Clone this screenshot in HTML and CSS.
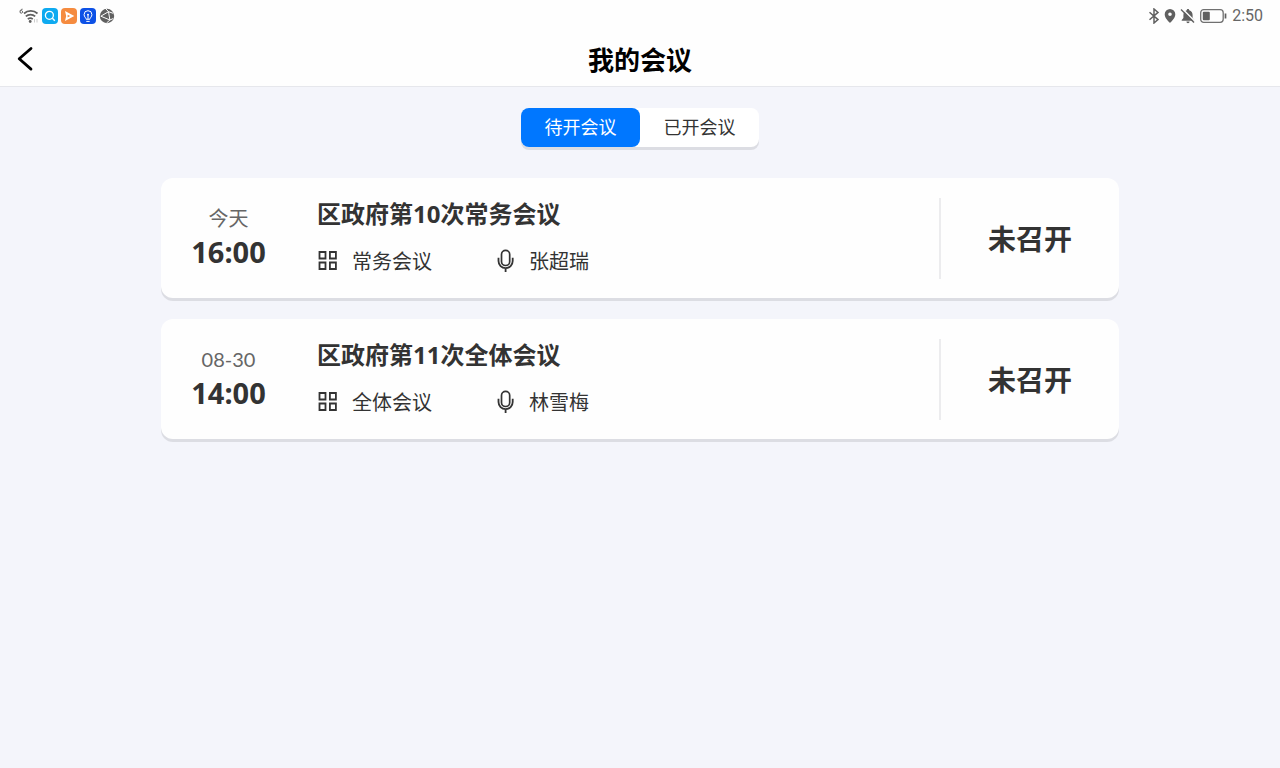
FILE: index.html
```html
<!DOCTYPE html>
<html lang="zh-CN">
<head>
<meta charset="utf-8">
<meta name="viewport" content="width=device-width, initial-scale=1">
<title>我的会议</title>
<link rel="stylesheet" href="styles.css">
</head>
<body>
<svg class="defs" aria-hidden="true">
  <symbol id="grid" viewBox="0 0 21 21">
    <path d="M2.500 2h6v6.500h-6zM12.900 2h6v6.500h-6zM2.500 12.500h6V19h-6zM12.900 12.500h6V19h-6z" fill="none" stroke="currentColor" stroke-width="1.800"/>
  </symbol>
  <symbol id="mic" viewBox="0 0 18 24">
    <rect x="4.500" y="1.300" width="8.200" height="15.200" rx="4.100" fill="none" stroke="currentColor" stroke-width="1.700"/>
    <path d="M1.500 8.800v3.200a7.100 7.100 0 0 0 14.200 0V8.800M8.600 19.100v4" fill="none" stroke="currentColor" stroke-width="1.800"/>
  </symbol>
</svg>
<header class="header">
  <div class="status">
    <div class="status-left">
      <svg width="20" height="16" viewBox="0 0 20 16" fill="none" stroke="#606060">
        <path d="M3.600 1.200C2 1.200 1 2.300 1 3.900a1.300 1.300 0 1 0 .4-1" stroke-width="1"/>
        <path d="M5 5.500a10 10 0 0 1 13.500 0M6.800 8.400a7 7 0 0 1 9.400 0M8.800 11.200a4 4 0 0 1 5 0" stroke-width="1.700"/>
        <circle cx="11.200" cy="13.500" r="1.400" fill="#606060" stroke="none"/>
        <path d="M15.500 14.500v-3.500M18 11v3.500" stroke="#ccc" stroke-width="1"/>
      </svg>
      <svg width="16" height="16" viewBox="0 0 16 16"><rect width="16" height="16" rx="4" fill="#0eaaf0"/><circle cx="7.400" cy="7.300" r="4" fill="none" stroke="#fff" stroke-width="1.300"/><path d="M10.400 10.300l2.400 2.400" stroke="#fff" stroke-width="1.400"/></svg>
      <svg width="16" height="16" viewBox="0 0 16 16"><rect width="16" height="16" rx="4" fill="#f58b3f"/><path d="M4 3l9.300 5L4 13l1.200-5z" fill="#fff"/><path d="M6.600 6.700l2.600 1.400-2.600 1.400z" fill="#f58b3f"/></svg>
      <svg width="16" height="16" viewBox="0 0 16 16"><rect width="16" height="16" rx="4" fill="#0d51e6"/><path d="M6.200 11.300C6.100 9.700 4.100 9 4.100 6.600a3.900 3.900 0 0 1 7.800 0c0 2.400-2 3.100-2.100 4.700zM6.300 13.400h3.400M8 11V7.500" fill="none" stroke="#fff" stroke-width="1"/><circle cx="8" cy="6.800" r="1" fill="#fff"/></svg>
      <svg width="16" height="16" viewBox="0 0 16 16"><circle cx="8" cy="8" r="7.200" fill="#606060"/><path d="M1.800 8.200L9.500 3.700 7 1M9.500 3.700l1.400 8.300 3.400-1.500M1.800 8.200l9.100 3.800-3.400 3M9.500 3.700l4.700 1.600" fill="none" stroke="#fff" stroke-width="1"/></svg>
    </div>
    <div class="status-right">
      <svg width="12" height="16" viewBox="0 0 12 16"><path d="M1.500 4.300l8.500 7.300L6 15V1l4 3.400-8.500 7.300" fill="none" stroke="#606060" stroke-width="1.500"/></svg>
      <svg width="12" height="16" viewBox="0 0 12 16"><path d="M6 1a5.300 5.300 0 0 0-5.300 5.300C.7 9.600 3.700 12.900 6 14.900c2.300-2 5.300-5.300 5.300-8.600A5.300 5.300 0 0 0 6 1zm0 3.500a1.800 1.800 0 1 1 0 3.600 1.800 1.800 0 0 1 0-3.600z" fill="#606060" fill-rule="evenodd"/></svg>
      <svg width="16" height="16" viewBox="0 0 16 16"><path d="M8 1c-.8 0-1.200.5-1.200 1.200C4.500 2.800 3.400 4.700 3.400 7v3L1.700 12v.8h12.600V12l-1.700-2V7c0-2.300-1.100-4.200-3.400-4.800C9.200 1.500 8.800 1 8 1zM6.400 13.600h3.200a1.600 1.600 0 0 1-3.200 0z" fill="#606060"/><path d="M2.300.8l13 13" stroke="#fff" stroke-width="1.600"/><path d="M1 1.500l13 13" stroke="#606060" stroke-width="1.400"/></svg>
      <svg width="28" height="16" viewBox="0 0 28 16"><rect x=".7" y="1.700" width="22.500" height="12.600" rx="3" fill="none" stroke="#707070" stroke-width="1.300"/><rect x="2.800" y="3.800" width="7" height="8.400" rx="1" fill="#606060"/><path d="M25.500 5.500v5" stroke="#606060" stroke-width="1.700"/></svg>
      <time class="clock">2:50</time>
    </div>
  </div>
  <div class="nav">
    <button class="back" type="button" aria-label="返回">
      <svg width="18" height="26" viewBox="0 0 18 26"><path d="M15 2.500L3.200 12.800 15 23.100" fill="none" stroke="#000" stroke-width="2.800" stroke-linecap="round" stroke-linejoin="round"/></svg>
    </button>
    <h1 class="title">我的会议</h1>
  </div>
</header>
<main class="main">
  <div class="tabs" role="tablist">
    <button class="tab tab-active" type="button" role="tab" aria-selected="true">待开会议</button>
    <button class="tab" type="button" role="tab" aria-selected="false">已开会议</button>
  </div>
  <section class="list">
    <article class="card">
      <div class="when"><span class="date">今天</span><time class="time">16:00</time></div>
      <div class="info">
        <h2 class="name">区政府第10次常务会议</h2>
        <div class="meta">
          <span class="kind"><svg class="icon" width="21" height="21"><use href="#grid"/></svg>常务会议</span>
          <span class="host"><svg class="icon" width="18" height="24"><use href="#mic"/></svg>张超瑞</span>
        </div>
      </div>
      <div class="state">未召开</div>
    </article>
    <article class="card">
      <div class="when"><span class="date">08-30</span><time class="time">14:00</time></div>
      <div class="info">
        <h2 class="name">区政府第11次全体会议</h2>
        <div class="meta">
          <span class="kind"><svg class="icon" width="21" height="21"><use href="#grid"/></svg>全体会议</span>
          <span class="host"><svg class="icon" width="18" height="24"><use href="#mic"/></svg>林雪梅</span>
        </div>
      </div>
      <div class="state">未召开</div>
    </article>
  </section>
</main>
</body>
</html>
```
FILE: styles.css
```css
* { box-sizing: border-box; }
body {
  margin: 0;
  min-height: 100vh;
  background: #f4f5fb;
  color: #333;
  font-family: "Noto Sans", "Noto Sans CJK SC", sans-serif;
}
svg { display: block; flex: none; }
.defs { position: absolute; width: 0; height: 0; }
button { font: inherit; color: inherit; border: 0; padding: 0; background: none; cursor: pointer; }

.header { background: #fefefe; border-bottom: 1px solid #e6e7ec; }
.status {
  display: flex;
  justify-content: space-between;
  height: 32px;
  padding: 0 17px 0 19px;
}
.status-left { display: flex; align-items: center; gap: 3px; }
.status-right { display: flex; align-items: center; gap: 4px; }
.clock { font-family: Roboto, sans-serif; font-size: 16px; line-height: 24px; color: #666; }
.nav {
  display: grid;
  grid-template-columns: 48px 1fr 48px;
  align-items: center;
  height: 54px;
}
.back { width: 48px; height: 48px; padding-left: 16px; }
.title { margin: 0; padding-top: 2px; font-size: 26px; line-height: 40px; font-weight: 700; text-align: center; color: #000; }

.main { padding: 21px 161px; }
.tabs {
  display: flex;
  width: 238px;
  margin: 0 auto 31px;
  background: #fff;
  border-radius: 8px;
  box-shadow: 0 3px 0 #dcdde3;
}
.tab { flex: 1; height: 39px; padding-bottom: 2px; border-radius: 8px; font-size: 18px; line-height: 36px; }
.tab-active { background: #07f; color: #fff; }

.list { display: grid; gap: 21px; }
.card {
  display: flex;
  align-items: center;
  min-height: 120px;
  background: #fefefe;
  border-radius: 12px;
  box-shadow: 0 3px 0 #dcdde3;
}
.when { display: flex; flex-direction: column; align-items: center; width: 135px; padding-bottom: 4px; }
.date { font-family: Lato, "Noto Sans CJK SC", sans-serif; font-size: 20px; line-height: 32px; color: #666; }
.time { font-size: 29px; line-height: 36px; font-weight: 700; }
.info { flex: 1; padding: 0 0 2px 21px; }
.name { margin: 0 0 14px; font-size: 24px; line-height: 36px; font-weight: 700; }
.meta { display: flex; font-size: 20px; line-height: 32px; }
.kind, .host { display: flex; align-items: center; gap: 14px; }
.kind { width: 180px; }
.icon { margin-bottom: 3px; }
.state {
  display: flex;
  align-items: center;
  justify-content: center;
  width: 180px;
  height: 81px;
  border-left: 2px solid #ececee;
  font-size: 28px;
  font-weight: 700;
}
```
